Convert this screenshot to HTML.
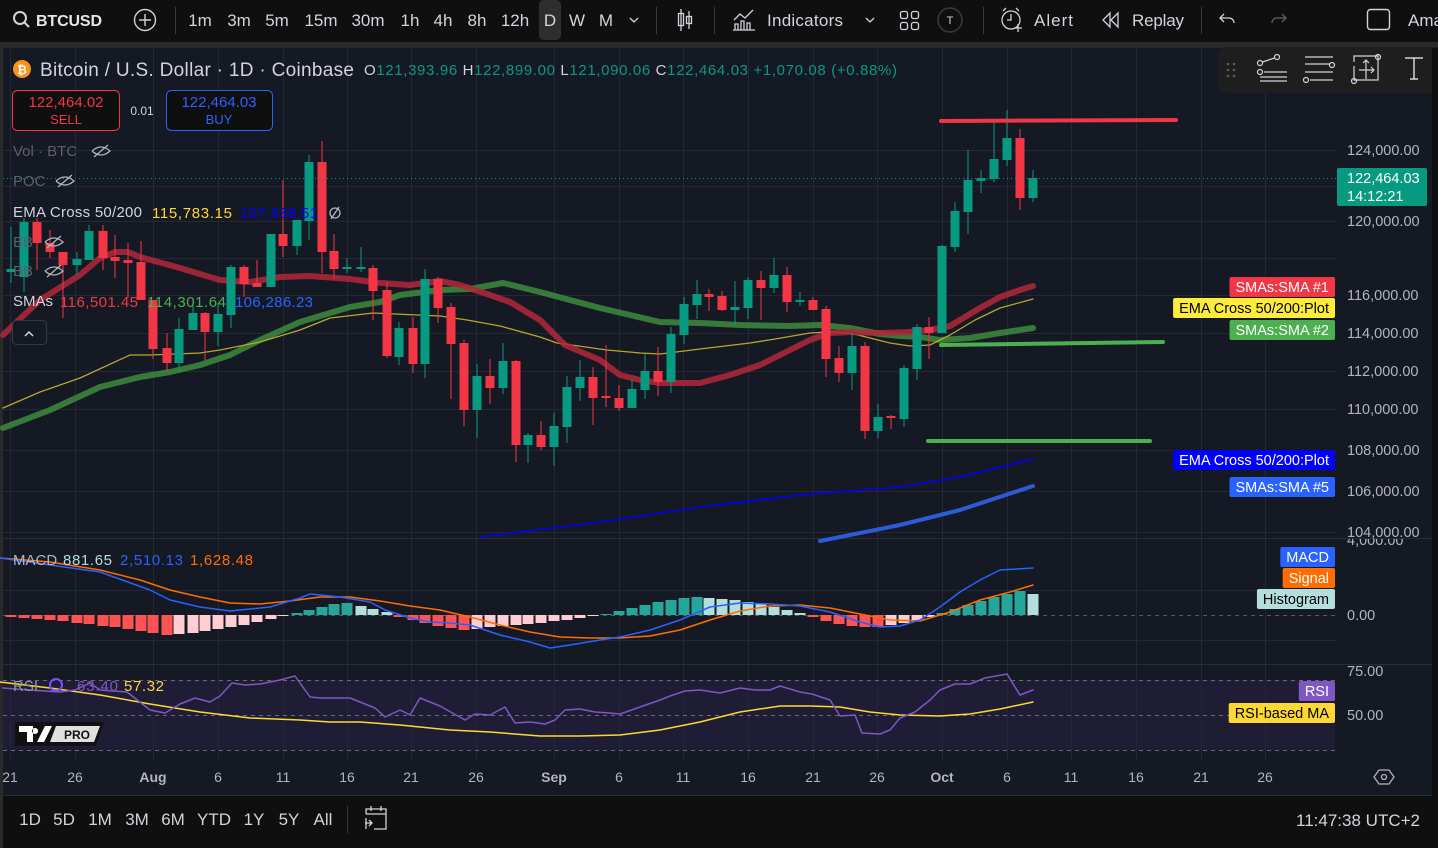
<!DOCTYPE html>
<html><head><meta charset="utf-8">
<style>
html,body{margin:0;padding:0;background:#0f0f0f;width:1438px;height:848px;overflow:hidden;font-family:"Liberation Sans",sans-serif}
svg{position:absolute;left:0;top:0}
</style></head><body>
<svg id="s" width="1438" height="848" viewBox="0 0 1438 848" xmlns="http://www.w3.org/2000/svg" font-family="Liberation Sans, sans-serif">
<rect x="0" y="0" width="1438" height="848" fill="#0f0f0f"/>
<rect x="0" y="42" width="1438" height="6" fill="#2a2a2a"/>
<rect x="3" y="48" width="1429" height="748" fill="#151924"/>
<rect x="0" y="48" width="3" height="800" fill="#2a2a2a"/>
<rect x="3" y="680" width="1332" height="70" fill="#1f1d36"/>
<g id="grid" stroke="#242835" stroke-width="1"></g>
<line x1="3" y1="538.5" x2="1432" y2="538.5" stroke="#2a2e39"/>
<line x1="3" y1="664.5" x2="1432" y2="664.5" stroke="#2a2e39"/>
<line x1="3" y1="795.5" x2="1432" y2="795.5" stroke="#2a2e39"/>
<line x1="3" y1="615.5" x2="1335" y2="615.5" stroke="#555a66" stroke-dasharray="4 4"/>
<line x1="3" y1="680.5" x2="1335" y2="680.5" stroke="#6a6d78" stroke-dasharray="4 4"/>
<line x1="3" y1="715.5" x2="1335" y2="715.5" stroke="#6a6d78" stroke-dasharray="4 4"/>
<line x1="3" y1="750.5" x2="1335" y2="750.5" stroke="#6a6d78" stroke-dasharray="4 4"/>
<g id="lines"></g>
<g id="candles"></g>
<line x1="3" y1="178.5" x2="1337" y2="178.5" stroke="#089981" stroke-dasharray="1 3"/>
<line x1="941" y1="121" x2="1176" y2="120" stroke="#f23645" stroke-width="4" stroke-linecap="round"/>
<line x1="941" y1="345" x2="1163" y2="342" stroke="#4caf50" stroke-width="4" stroke-linecap="round"/>
<line x1="928" y1="441" x2="1150" y2="441" stroke="#4caf50" stroke-width="4" stroke-linecap="round"/>

<g fill="#d1d4dc" font-size="17">
<circle cx="20" cy="18" r="6" fill="none" stroke="#d1d4dc" stroke-width="2"/><line x1="24.5" y1="22.5" x2="29" y2="27" stroke="#d1d4dc" stroke-width="2"/>
<text x="36" y="26" font-weight="bold" font-size="16" fill="#e6e6e6" textLength="66">BTCUSD</text>
<circle cx="145" cy="20" r="10.5" fill="none" stroke="#d1d4dc" stroke-width="1.4"/><path d="M145 14v12M139 20h12" stroke="#d1d4dc" stroke-width="1.4"/>
<rect x="175" y="7" width="1" height="27" fill="#3a3a3a"/>
<rect x="539" y="0" width="22" height="40" rx="5" fill="#2e2e2e"/>
<text x="200" y="26" text-anchor="middle">1m</text><text x="239" y="26" text-anchor="middle">3m</text><text x="277" y="26" text-anchor="middle">5m</text><text x="321" y="26" text-anchor="middle">15m</text><text x="368" y="26" text-anchor="middle">30m</text><text x="410" y="26" text-anchor="middle">1h</text><text x="443" y="26" text-anchor="middle">4h</text><text x="477" y="26" text-anchor="middle">8h</text><text x="515" y="26" text-anchor="middle">12h</text><text x="550" y="26" text-anchor="middle">D</text><text x="577" y="26" text-anchor="middle">W</text><text x="606" y="26" text-anchor="middle">M</text>
<path d="M630 18l4 4 4-4" fill="none" stroke="#d1d4dc" stroke-width="1.3"/>
<rect x="656" y="7" width="1" height="27" fill="#3a3a3a"/>
<path d="M681 9v22M689 11v18" stroke="#d1d4dc" stroke-width="1.3"/><rect x="678.5" y="13.5" width="5" height="12" fill="none" stroke="#d1d4dc" stroke-width="1.3"/><rect x="686.5" y="16.5" width="5" height="7" fill="none" stroke="#d1d4dc" stroke-width="1.3"/>
<rect x="714" y="7" width="1" height="27" fill="#3a3a3a"/>
<path d="M733 30h22M735 30v-6h3v6M741 30v-9h3v9M747 30v-7h3v7M734 20l6-6 5 4 8-8" fill="none" stroke="#d1d4dc" stroke-width="1.3"/>
<text x="767" y="26" textLength="76">Indicators</text>
<path d="M866 18l4 4 4-4" fill="none" stroke="#d1d4dc" stroke-width="1.3"/>
<g fill="none" stroke="#d1d4dc" stroke-width="1.3"><rect x="900.5" y="11.5" width="7" height="7" rx="2"/><rect x="911.5" y="11.5" width="7" height="7" rx="2"/><rect x="900.5" y="22.5" width="7" height="7" rx="2"/><rect x="911.5" y="22.5" width="7" height="7" rx="2"/></g>
<circle cx="950" cy="20" r="12" fill="none" stroke="#3a3a3a" stroke-width="1.5"/><text x="950" y="24" text-anchor="middle" font-size="11">T</text>
<rect x="983" y="7" width="1" height="27" fill="#3a3a3a"/>
<circle cx="1011" cy="20" r="9" fill="none" stroke="#d1d4dc" stroke-width="1.3"/><path d="M1011 14v6h-4M1003 11l3-3M1019 11l-3-3M1018 24v8M1014 28h8" fill="none" stroke="#d1d4dc" stroke-width="1.3"/>
<text x="1034" y="26" textLength="39">Alert</text>
<path d="M1110 13l-7 7 7 7zM1118 13l-7 7 7 7z" fill="none" stroke="#d1d4dc" stroke-width="1.3"/>
<text x="1132" y="26" textLength="52">Replay</text>
<rect x="1201" y="7" width="1" height="27" fill="#3a3a3a"/>
<path d="M1224 14l-4 4 4 4M1220 18h9a5 5 0 0 1 5 5" fill="none" stroke="#d1d4dc" stroke-width="1.3"/>
<path d="M1282 14l4 4-4 4M1286 18h-9a5 5 0 0 0-5 5" fill="none" stroke="#5d606b" stroke-width="1.3"/>
<rect x="1367.5" y="9.5" width="22" height="20" rx="3" fill="none" stroke="#d1d4dc" stroke-width="1.4"/>
<text x="1408" y="26">Ama</text>
</g>

<rect x="1218" y="47" width="225" height="46" rx="8" fill="#1e1e1e"/>
<g fill="#5a5a5a"><circle cx="1228" cy="64" r="1.3"/><circle cx="1234" cy="64" r="1.3"/><circle cx="1228" cy="70" r="1.3"/><circle cx="1234" cy="70" r="1.3"/><circle cx="1228" cy="76" r="1.3"/><circle cx="1234" cy="76" r="1.3"/></g>
<g fill="none" stroke="#d1d4dc" stroke-width="1.2">
<circle cx="1260" cy="63" r="2.5"/><circle cx="1277" cy="57" r="2.5"/><circle cx="1260" cy="72" r="2.5"/><path d="M1262.5 62l12-4M1264 72h23M1260 77h27M1260 81h27"/>
<path d="M1305 57h28M1305 64h25M1305 72h28M1310 80h23"/><circle cx="1332" cy="65" r="2.5"/><circle cx="1306" cy="80" r="2.5"/>
<path d="M1354 62v-6h24v24h-24v-14"/><circle cx="1378" cy="57" r="2.5"/><circle cx="1354" cy="81" r="2.5"/><path d="M1366 60v19M1359 70h15M1363 63l3-3 3 3M1371 67l3 3-3 3"/>
<path d="M1405 58h18M1414 58v21M1410 79h8" stroke-width="1.5"/>
</g>

<circle cx="22" cy="69" r="9" fill="#f7931a"/><text x="22" y="74" font-size="12" font-weight="bold" fill="#fff" text-anchor="middle">₿</text>
<text x="40" y="76" font-size="19" fill="#d1d4dc" textLength="314">Bitcoin / U.S. Dollar · 1D · Coinbase</text>
<text x="364" y="75" font-size="15" fill="#d1d4dc" textLength="533">O<tspan fill="#089981">121,393.96</tspan> H<tspan fill="#089981">122,899.00</tspan> L<tspan fill="#089981">121,090.06</tspan> C<tspan fill="#089981">122,464.03</tspan> <tspan fill="#089981">+1,070.08 (+0.88%)</tspan></text>
<rect x="12.5" y="90.5" width="107" height="40" rx="5" fill="#0f0f0f" stroke="#f23645"/>
<text x="66" y="107" font-size="15" fill="#f23645" text-anchor="middle">122,464.02</text><text x="66" y="124" font-size="13" fill="#f23645" text-anchor="middle">SELL</text>
<text x="142" y="115" font-size="12" fill="#d1d4dc" text-anchor="middle">0.01</text>
<rect x="166.5" y="90.5" width="106" height="40" rx="5" fill="#0f0f0f" stroke="#2962ff"/>
<text x="219" y="107" font-size="15" fill="#2962ff" text-anchor="middle">122,464.03</text><text x="219" y="124" font-size="13" fill="#2962ff" text-anchor="middle">BUY</text>
<g font-size="15">
<text x="13" y="156" fill="#5d606b">Vol · BTC</text>
<text x="13" y="186" fill="#5d606b">POC</text>
<text x="13" y="217" fill="#d1d4dc" textLength="129">EMA Cross 50/200</text><text x="152" y="218" fill="#fdd835" textLength="80">115,783.15</text><text x="240" y="218" fill="#0000ff" textLength="78">107,638.51</text>
<text x="13" y="247" fill="#5d606b">BB</text><text x="13" y="276" fill="#5d606b">BB</text>
<text x="13" y="306" fill="#d1d4dc">SMAs</text><text x="60" y="307" fill="#f23645" textLength="78">116,501.45</text><text x="147" y="307" fill="#4caf50" textLength="79">114,301.64</text><text x="235" y="307" fill="#2962ff" textLength="78">106,286.23</text>
</g>
<g fill="none" stroke="#b2b5be" stroke-width="1.3">
<path d="M92 151q9-8 18 0q-9 8-18 0M94 157l14-12"/><path d="M56 181q9-8 18 0q-9 8-18 0M58 187l14-12"/>
<path d="M45 242q9-8 18 0q-9 8-18 0M47 248l14-12"/><path d="M45 271q9-8 18 0q-9 8-18 0M47 277l14-12"/>
<circle cx="335" cy="213" r="5"/><path d="M331 219l8-12"/>
</g>
<rect x="12.5" y="320.5" width="34" height="24" rx="4" fill="#151924" stroke="#363a45"/>
<path d="M25 336l4-4 4 4" fill="none" stroke="#d1d4dc" stroke-width="1.5"/>

<text x="13" y="565" font-size="15" fill="#b2b5be">MACD</text><text x="63" y="565" font-size="15" fill="#b2dfdb" textLength="49">881.65</text><text x="120" y="565" font-size="15" fill="#2962ff" textLength="63">2,510.13</text><text x="190" y="565" font-size="15" fill="#ff6d00" textLength="63">1,628.48</text>
<text x="13" y="691" font-size="15" fill="#9598a1">RSI</text>
<circle cx="56" cy="685" r="6" fill="none" stroke="#7c4dff" stroke-width="2"/>
<text x="77" y="691" font-size="15" fill="#7e57c2" textLength="41">63.40</text><text x="124" y="691" font-size="15" fill="#fdd835" textLength="40">57.32</text>
<path d="M15 722h89l-8 24h-81z" fill="#111"/>
<path d="M19 726h14v16h-6v-10h-8zM35 728a3 3 0 1 0 .1 0zM45 726h7l-8 16h-7z" fill="#fff"/>
<path d="M56 726h44l-6 16h-44z" fill="#e0e0e0"/>
<text x="64" y="739" font-size="12" font-weight="bold" fill="#111">PRO</text>

<g font-size="14.5" fill="#b2b5be">
<text x="1347" y="155">124,000.00</text><text x="1347" y="226">120,000.00</text><text x="1347" y="300">116,000.00</text><text x="1347" y="338">114,000.00</text><text x="1347" y="376">112,000.00</text><text x="1347" y="414">110,000.00</text><text x="1347" y="455">108,000.00</text><text x="1347" y="496">106,000.00</text><text x="1347" y="537">104,000.00</text><text x="1347" y="545" clip-path="url(#cp)">4,000.00</text>
<text x="1347" y="620">0.00</text><text x="1347" y="676">75.00</text><text x="1347" y="720">50.00</text>
</g>
<rect x="1337" y="168" width="90" height="38" rx="2" fill="#089981"/>
<text x="1347" y="183" font-size="14.5" fill="#fff">122,464.03</text><text x="1347" y="201" font-size="14.5" fill="#fff">14:12:21</text>
<rect x="1432" y="48" width="6" height="800" fill="#0f0f0f"/>
<g id="tags" font-size="14.5"></g>

<g id="dates" font-size="14" fill="#b2b5be" text-anchor="middle"></g>
<path d="M1379 770h10l5 7-5 7h-10l-5-7z" fill="none" stroke="#b2b5be" stroke-width="1.3"/><circle cx="1384" cy="777" r="2.5" fill="none" stroke="#b2b5be" stroke-width="1.3"/>

<rect x="3" y="797" width="1429" height="48" rx="4" fill="#0f0f0f"/>
<g font-size="17" fill="#d1d4dc" text-anchor="middle">
<text x="30" y="825">1D</text><text x="64" y="825">5D</text><text x="100" y="825">1M</text><text x="137" y="825">3M</text><text x="173" y="825">6M</text><text x="214" y="825">YTD</text><text x="254" y="825">1Y</text><text x="289" y="825">5Y</text><text x="323" y="825">All</text>
</g>
<rect x="347" y="806" width="1" height="27" fill="#3a3a3a"/>
<path d="M366 814v-5h20v20h-12M366 814h20M371 806v5M381 806v5M365 823h7M369 820l3 3-3 3M366 818v11" fill="none" stroke="#d1d4dc" stroke-width="1.3"/>
<text x="1420" y="826" font-size="17" fill="#d1d4dc" text-anchor="end">11:47:38 UTC+2</text>
<defs><clipPath id="cp"><rect x="1337" y="539" width="100" height="20"/></clipPath></defs>
</svg>
<script>
var NS="http://www.w3.org/2000/svg";
function el(p,t,a){var e=document.createElementNS(NS,t);for(var k in a)e.setAttribute(k,a[k]);p.appendChild(e);return e;}
var g=document.getElementById('grid');
var hy=[150,186,221,258,295,333,371,409,450,491,532];
hy.forEach(function(y){el(g,'line',{x1:3,y1:y+.5,x2:1337,y2:y+.5});});
[590,640].forEach(function(y){el(g,'line',{x1:3,y1:y+.5,x2:1337,y2:y+.5});});
var dx=[10,75,153,218,283,347,411,476,554,619,683,748,813,877,942,1007,1071,1136,1201,1265];
var dl=["21","26","Aug","6","11","16","21","26","Sep","6","11","16","21","26","Oct","6","11","16","21","26"];
dx.forEach(function(x){el(g,'line',{x1:x+.5,y1:48,x2:x+.5,y2:760});});
var D=document.getElementById('dates');
dx.forEach(function(x,i){var t=el(D,'text',{x:x,y:782});if(/[A-Z]/.test(dl[i]))t.setAttribute('font-weight','bold');t.textContent=dl[i];});
var C=[[11,227,283,269,272,1],[24,218,292,222,277,1],[37,218,270,222,243,0],[50,230,258,243,252,0],[63,252,318,252,265,0],[77,252,275,259,265,1],[89,225,260,231,260,1],[103,225,270,231,258,0],[115,235,278,257,261,0],[128,243,298,260,263,0],[141,241,300,262,300,0],[153,300,359,300,349,0],[167,333,372,348,363,0],[179,318,373,329,363,1],[193,303,330,313,330,1],[205,312,360,313,332,0],[218,303,346,314,332,1],[231,265,328,267,315,1],[244,265,297,267,284,0],[257,260,287,283,287,0],[271,234,287,234,287,1],[283,180,257,234,246,0],[297,220,255,220,246,1],[309,155,240,162,221,1],[322,141,273,162,252,0],[334,234,279,251,269,0],[347,258,273,267,269,1],[361,247,272,267,269,1],[373,265,320,268,291,0],[387,282,358,290,356,0],[399,322,365,328,357,1],[413,317,373,328,364,0],[425,269,378,279,364,1],[438,277,323,279,308,0],[451,303,399,307,344,0],[464,340,426,343,410,0],[477,364,438,376,410,1],[490,359,404,376,388,0],[503,343,394,361,388,1],[516,360,462,361,445,0],[528,433,463,435,445,1],[541,421,450,435,447,0],[554,413,466,426,447,1],[567,376,443,387,427,1],[580,360,401,377,388,1],[593,367,425,377,398,0],[606,345,407,396,398,0],[619,385,411,398,408,0],[632,380,408,389,408,1],[645,354,399,371,390,1],[658,347,396,371,382,0],[671,327,393,334,382,1],[684,297,344,304,335,1],[697,280,319,294,305,1],[709,289,311,294,297,0],[722,291,311,296,310,0],[735,281,326,307,310,1],[748,277,319,280,308,1],[761,271,320,280,288,0],[774,258,293,275,288,1],[787,267,312,275,302,0],[800,292,306,300,302,1],[813,297,310,300,310,0],[826,306,377,309,359,0],[839,346,382,358,373,0],[852,333,390,346,373,1],[865,342,439,346,431,0],[878,404,438,417,431,1],[891,415,429,416,418,0],[904,365,427,368,419,1],[917,324,380,327,369,1],[929,317,359,327,333,0],[942,245,333,246,333,1],[955,202,252,211,247,1],[968,150,234,180,212,1],[981,170,193,178,181,1],[994,120,182,159,179,1],[1007,110,166,138,160,1],[1020,129,210,138,198,0],[1033,170,202,178,198,1]];
function pts(a){return a.map(function(p){return p[0]+','+p[1];}).join(' ');}
var L=document.getElementById('lines');
function pl(a,c,w,o){el(L,'polyline',{points:pts(a),fill:'none',stroke:c,'stroke-width':w,'stroke-linejoin':'round','stroke-linecap':'round',opacity:o||1});}
var H=[-2,-3,-4,-5,-6,-8,-9,-11,-12,-14,-16,-18,-20,-19,-18,-16,-14,-12,-10,-7,-4,-1,2,5,8,11,12,9,6,3,-2,-5,-8,-11,-13,-15,-14,-12,-11,-10,-9,-8,-6,-5,-3,-1,1,4,7,10,13,15,17,18,17,16,15,13,11,8,5,2,-2,-6,-9,-11,-12,-12,-10,-8,-5,-2,2,6,10,14,18,21,24,21];
var Hg=document.createElementNS(NS,'g');document.getElementById('s').insertBefore(Hg,L);
C.forEach(function(c,i){var v=H[i],p=i?H[i-1]:0,col;
 if(v>=0)col=(v>=p)?'#26a69a':'#b2dfdb';else col=(v<=p)?'#ff5252':'#ffcdd2';
 var y=v>=0?615-v:615,h=Math.abs(v);el(Hg,'rect',{x:c[0]-5.5,y:y,width:11,height:Math.max(h,1),fill:col});});
pl([[0,558],[50,562],[100,570],[140,580],[170,590],[200,597],[230,603],[260,604],[290,601],[320,597],[350,597],[380,601],[410,606],[440,610],[470,617],[500,625],[530,632],[560,637],[590,638],[620,638],[650,636],[680,630],[710,620],[740,611],[770,606],[800,605],[830,608],[860,614],[890,620],[920,621],[950,612],[980,600],[1010,592],[1033,585]],'#ff6d00',1.5);
pl([[0,558],[50,565],[100,572],[150,590],[170,600],[200,607],[230,611],[250,609],[270,607],[300,598],[310,594],[340,597],[370,602],[385,610],[410,618],[430,622],[450,623],[470,625],[500,635],[530,642],[550,648],[570,645],[600,640],[620,637],[650,630],[680,620],[710,607],[740,603],[770,604],[800,606],[830,612],[860,622],[880,627],[900,626],[920,620],[940,607],[960,592],[980,580],[1000,570],[1033,568]],'#2962ff',1.5);
pl([[0,682],[50,688],[100,695],[150,704],[200,712],[250,718],[300,720],[330,722],[360,722],[400,725],[450,730],[490,732],[540,736],[580,736],[620,735],[660,730],[700,722],[740,712],[780,706],[810,706],[840,707],[870,712],[900,715],[940,716],[970,714],[1000,709],[1033,702]],'#fdd835',1.5);
pl([[3,688],[30,690],[60,692],[75,690],[90,683],[100,690],[127,692],[150,710],[165,713],[180,704],[195,698],[210,702],[220,696],[232,683],[245,685],[260,684],[280,680],[295,676],[310,697],[320,698],[350,698],[375,708],[385,717],[400,710],[410,715],[420,698],[440,706],[465,720],[475,714],[490,715],[505,707],[515,723],[530,722],[545,724],[555,720],[565,710],[580,709],[595,712],[610,713],[620,714],[640,707],[660,700],[670,696],[685,691],[700,690],[720,693],[740,688],[755,690],[770,690],[780,686],[800,692],[812,694],[830,700],[840,716],[855,715],[862,733],[880,734],[890,730],[900,718],[915,712],[930,700],[940,690],[955,684],[970,684],[985,678],[1007,674],[1020,695],[1033,690]],'#7e57c2',1.5);
pl([[480,537],[600,522],[700,507],[800,495],[900,487],[960,477],[1033,459]],'#0000ff',1.5);
pl([[820,541],[900,525],[960,510],[1033,486]],'#2d5bd8',4);
pl([[3,428],[50,410],[100,387],[140,377],[170,372],[200,365],[230,355],[260,340],[300,322],[330,313],[350,307],[380,302],[400,295],[440,290],[470,289],[503,283],[540,292],[570,300],[600,308],[630,315],[660,322],[700,323],[740,325],[790,326],[820,325],[850,328],[880,334],[900,336],[920,337],[940,340],[970,338],[1000,333],[1033,328]],'#3d8b3d',6,0.85);
pl([[3,408],[40,392],[80,378],[130,355],[150,355],[200,353],[220,350],[260,342],[300,330],[330,318],[373,313],[440,316],[467,320],[500,326],[540,337],[557,343],[607,350],[640,353],[660,354],[700,349],[750,343],[775,339],[810,333],[830,332],[850,333],[870,338],[890,343],[910,346],[930,345],[950,335],[975,320],[1000,308],[1033,299]],'#b8a72a',1.3);
pl([[3,335],[40,300],[80,275],[100,258],[115,252],[128,252],[140,257],[180,268],[220,280],[250,282],[280,277],[310,276],[350,279],[380,283],[410,285],[440,281],[460,285],[490,295],[510,302],[540,320],[565,345],[600,360],[620,375],[640,380],[660,383],[700,383],[730,375],[760,365],[790,350],[810,340],[830,333],[850,332],[880,333],[910,332],[930,330],[950,326],[960,320],[980,308],[1000,297],[1020,290],[1033,286]],'#b0283a',6,0.85);
var CG=document.getElementById('candles');
C.forEach(function(c){var col=c[5]?'#089981':'#f23645';
 el(CG,'rect',{x:c[0]-0.5,y:c[1],width:1,height:c[2]-c[1],fill:col});
 el(CG,'rect',{x:c[0]-4.5,y:c[3],width:9,height:Math.max(c[4]-c[3],1),fill:col});});
var T=document.getElementById('tags');
[["SMAs:SMA #1",277,"#f23645","#fff"],["EMA Cross 50/200:Plot",298,"#ffeb3b","#000"],["SMAs:SMA #2",320,"#4caf50","#fff"],["EMA Cross 50/200:Plot",450,"#0000ff","#fff"],["SMAs:SMA #5",477,"#2962ff","#fff"],["MACD",547,"#2962ff","#fff"],["Signal",568,"#ff6d00","#fff"],["Histogram",589,"#b2dfdb","#000"],["RSI",681,"#7e57c2","#fff"],["RSI-based MA",703,"#fdd835","#000"]].forEach(function(t){
 var tx=el(T,'text',{x:1329,y:t[1]+15,'text-anchor':'end',fill:t[3]});tx.textContent=t[0];
 var w=tx.getComputedTextLength()+12;
 var r=document.createElementNS(NS,'rect');r.setAttribute('x',1335-w);r.setAttribute('y',t[1]);r.setAttribute('width',w);r.setAttribute('height',20);r.setAttribute('rx',2);r.setAttribute('fill',t[2]);T.insertBefore(r,tx);});
</script>
</body></html>
